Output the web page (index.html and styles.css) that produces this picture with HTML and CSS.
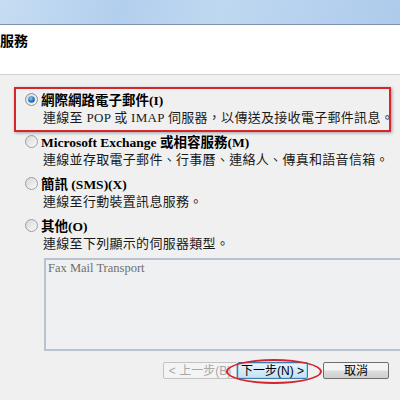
FILE: index.html
```html
<!DOCTYPE html>
<html lang="zh-Hant">
<head>
    <meta charset="UTF-8">
    <meta name="viewport" content="width=device-width, initial-scale=1.0">
    <title>新增帳戶 - 選擇服務</title>
    <link rel="stylesheet" href="styles.css">
</head>
<body>
    <div class="titlebar"></div>

    <div class="header">
        <h1>服務</h1>
    </div>

    <div class="content">
        <div class="option marked">
            <div class="option-title">
                <svg class="radio" width="13" height="13" viewBox="0 0 13 13">
                    <defs>
                        <linearGradient id="rbg" x1="0" y1="0" x2="1" y2="1">
                            <stop offset="0" stop-color="#d6d6d6"/>
                            <stop offset="1" stop-color="#fbfbfb"/>
                        </linearGradient>
                        <radialGradient id="dot" cx="0.4" cy="0.35" r="0.7">
                            <stop offset="0" stop-color="#8fd0f8"/>
                            <stop offset="0.5" stop-color="#2f86d0"/>
                            <stop offset="1" stop-color="#174f94"/>
                        </radialGradient>
                    </defs>
                    <circle cx="6.5" cy="6.5" r="6" fill="url(#rbg)" stroke="#8a8f96"/>
                    <circle cx="6.5" cy="6.5" r="3.3" fill="url(#dot)"/>
                </svg>
                <span>網際網路電子郵件(I)</span>
            </div>
            <div class="option-desc">連線至 POP 或 IMAP 伺服器，以傳送及接收電子郵件訊息。</div>
        </div>

        <div class="option">
            <div class="option-title">
                <svg class="radio" width="13" height="13" viewBox="0 0 13 13">
                    <circle cx="6.5" cy="6.5" r="6" fill="url(#rbg)" stroke="#9a9fa5"/>
                </svg>
                <span>Microsoft Exchange 或相容服務(M)</span>
            </div>
            <div class="option-desc">連線並存取電子郵件、行事曆、連絡人、傳真和語音信箱。</div>
        </div>

        <div class="option">
            <div class="option-title">
                <svg class="radio" width="13" height="13" viewBox="0 0 13 13">
                    <circle cx="6.5" cy="6.5" r="6" fill="url(#rbg)" stroke="#9a9fa5"/>
                </svg>
                <span>簡訊 (SMS)(X)</span>
            </div>
            <div class="option-desc">連線至行動裝置訊息服務。</div>
        </div>

        <div class="option">
            <div class="option-title">
                <svg class="radio" width="13" height="13" viewBox="0 0 13 13">
                    <circle cx="6.5" cy="6.5" r="6" fill="url(#rbg)" stroke="#9a9fa5"/>
                </svg>
                <span>其他(O)</span>
            </div>
            <div class="option-desc">連線至下列顯示的伺服器類型。</div>
        </div>

        <div class="listbox">
            <div class="list-item">Fax Mail Transport</div>
        </div>
    </div>

    <div class="buttons">
        <button class="btn disabled">&lt; 上一步(B)</button>
        <button class="btn primary">下一步(N) &gt;</button>
        <button class="btn cancel">取消</button>
    </div>
</body>
</html>
```

FILE: styles.css
```css
body {
    margin: 0;
    width: 400px;
    height: 400px;
    overflow: hidden;
    background-color: #f0f0f0;
    font-family: "Liberation Serif", "Noto Sans CJK TC", serif;
    color: #000;
}

.titlebar {
    height: 24px;
    background: linear-gradient(100deg, #c6dcf2 0%, #b3cfee 30%, #bfd8f1 55%, #aecbec 100%);
    border-bottom: 1px solid #7f93ab;
}

.header {
    height: 49px;
    background-color: #fff;
    border-bottom: 1px solid #d2d2d2;
}

.header h1 {
    margin: 0;
    padding-top: 9px;
    font-size: 14px;
    line-height: 16px;
    font-weight: bold;
}

.content {
    padding: 15px 0 0 25px;
}

.option {
    margin-bottom: 5px;
}

.option.marked {
    position: relative;
}

.option.marked::after {
    content: "";
    position: absolute;
    left: -11px;
    top: -3px;
    width: 373px;
    height: 41px;
    border: 2px solid #d6262c;
    box-shadow: 1px 1px 3px rgba(0, 0, 0, 0.35);
}

.option-title {
    display: flex;
    align-items: center;
    gap: 3px;
    height: 18px;
    font-size: 13.5px;
    font-weight: bold;
}

.radio {
    flex: none;
}

.option-desc {
    height: 19px;
    line-height: 20px;
    padding-left: 18px;
    font-size: 13px;
    letter-spacing: 0.3px;
    color: #1a1a1a;
    white-space: nowrap;
}

.listbox {
    margin: 4px 0 0 19px;
    width: 370px;
    height: 89px;
    background-color: #eff0f1;
    border: 2px solid #b9c3d0;
}

.list-item {
    padding: 1px 2px;
    font-size: 12.5px;
    color: #6e6e6e;
}

.buttons {
    position: relative;
    display: flex;
    margin-top: 11px;
    padding-left: 163px;
}

.btn {
    height: 17px;
    padding: 0;
    font-family: "Liberation Sans", "Noto Sans CJK TC", sans-serif;
    font-size: 12px;
    line-height: 14px;
    border-radius: 2px;
}

.btn.disabled {
    width: 74px;
    color: #a8a8a8;
    background-color: #f4f4f4;
    border: 1px solid #c3c3c3;
}

.btn.primary {
    width: 71px;
    color: #000;
    background: linear-gradient(#e8f5fc, #c2e2f5);
    border: 1px solid #3d7bad;
    box-shadow: inset 0 0 0 1px #9fdcf9;
}

.btn.cancel {
    width: 66px;
    margin-left: 15px;
    color: #000;
    background: linear-gradient(#f4f4f4 45%, #dcdcdc 55%, #cfcfcf);
    border: 1px solid #707070;
}

.buttons::after {
    content: "";
    position: absolute;
    left: 226px;
    top: -3px;
    width: 92px;
    height: 21px;
    border: 2px solid #d4232a;
    border-radius: 50%;
}
```
